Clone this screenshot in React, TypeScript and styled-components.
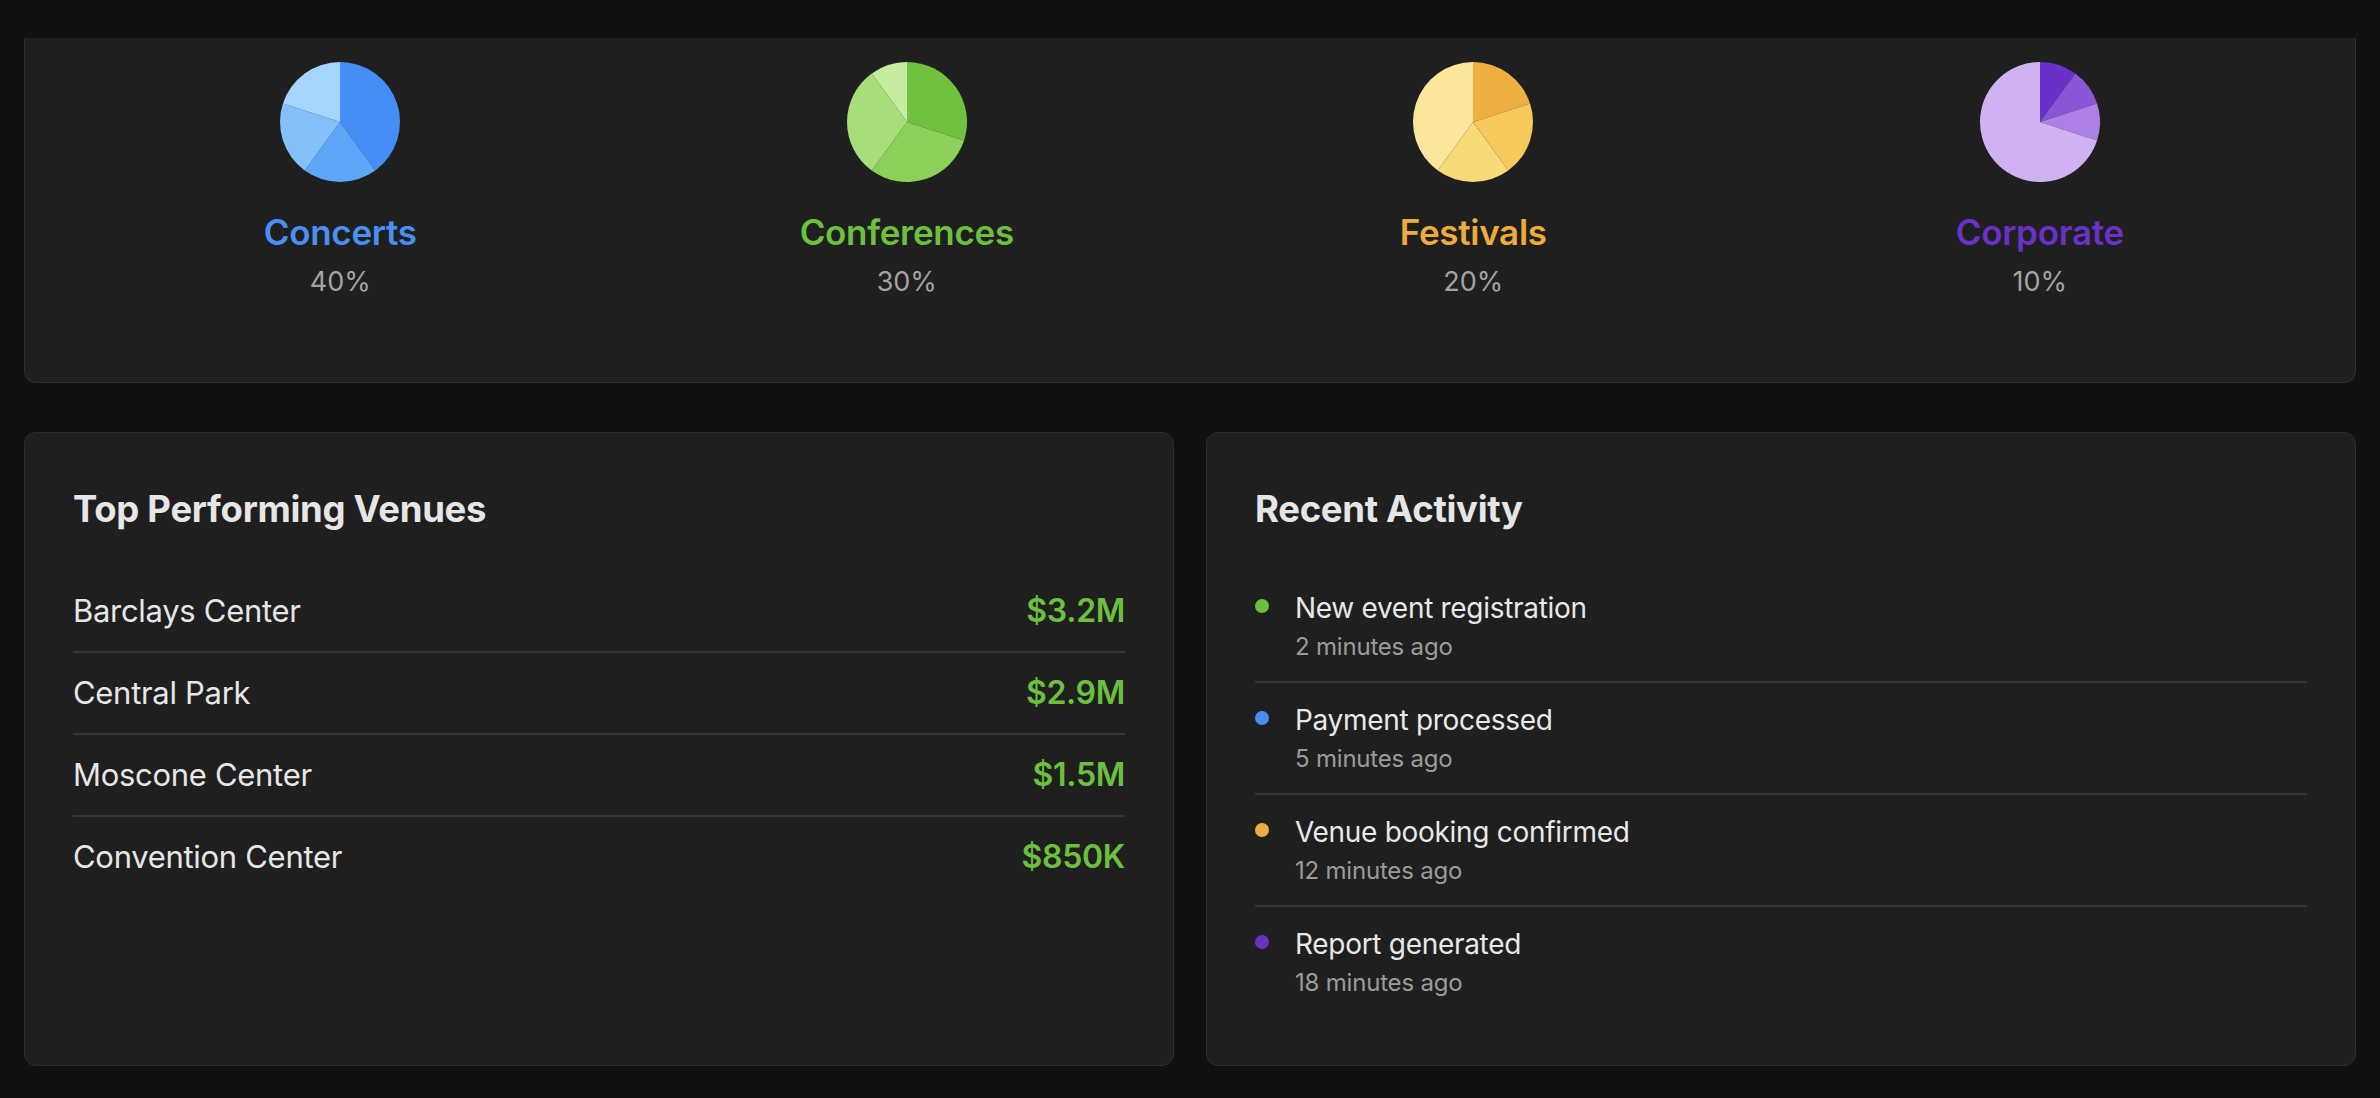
import React from "react";
import styled, { createGlobalStyle } from "styled-components";

const GlobalStyle = createGlobalStyle`
  html, body { margin: 0; padding: 0; background: #111111; }
  body {
    font-family: Inter, "Noto Sans", "Liberation Sans", sans-serif;
    -webkit-font-smoothing: antialiased;
  }
  * { box-sizing: border-box; }
`;

const TopBar = styled.header`
  height: 38px;
  background: #111111;
`;

const Content = styled.main`
  padding: 0 24px 33px;
`;

const DistributionCard = styled.section`
  background: #1f1f1f;
  border: 1px solid #2e2e2e;
  border-top: none;
  border-radius: 0 0 12px 12px;
  padding: 24px 48px 84px;
  display: grid;
  grid-template-columns: repeat(4, 1fr);
  gap: 32px;
`;

const Category = styled.div`
  display: flex;
  flex-direction: column;
  align-items: center;
`;

const CategoryName = styled.div<{ $color: string }>`
  margin-top: 30px;
  font-size: 35px;
  line-height: 40px;
  font-weight: 600;
  color: ${(p) => p.$color};
  letter-spacing: -0.3px;
`;

const CategoryPct = styled.div`
  margin-top: 14px;
  font-size: 27px;
  line-height: 32px;
  color: #a3a3a3;
`;

const LowerGrid = styled.div`
  margin-top: 49px;
  display: grid;
  grid-template-columns: 1fr 1fr;
  gap: 32px;
`;

const Panel = styled.section`
  background: #1f1f1f;
  border: 1px solid #2e2e2e;
  border-radius: 12px;
  padding: 48px;
`;

const PanelTitle = styled.h2`
  margin: 0 0 32px;
  font-size: 36.5px;
  line-height: 57.6px;
  font-weight: 700;
  color: #e6e6e6;
  letter-spacing: -0.3px;
`;

const List = styled.ul`
  list-style: none;
  margin: 0;
  padding: 0;
`;

const VenueRow = styled.li`
  display: flex;
  justify-content: space-between;
  align-items: center;
  padding: 16px 0;
  font-size: 31px;
  line-height: 48px;
  border-bottom: 2px solid #353535;
  &:last-child { border-bottom: none; }
`;

const VenueName = styled.span`
  color: #e6e6e6;
  letter-spacing: -0.3px;
`;

const VenueValue = styled.span`
  color: #6cbf3f;
  font-size: 32px;
  font-weight: 600;
  letter-spacing: -0.3px;
`;

const ActivityRow = styled.li`
  display: flex;
  align-items: flex-start;
  gap: 26px;
  padding: 16px 0;
  border-bottom: 2px solid #353535;
  &:last-child { border-bottom: none; }
`;

const Dot = styled.span<{ $color: string }>`
  flex: none;
  width: 14px;
  height: 14px;
  margin-top: 12px;
  border-radius: 50%;
  background: ${(p) => p.$color};
`;

const ActivityText = styled.div`
  display: flex;
  flex-direction: column;
`;

const ActivityTitle = styled.span`
  font-size: 28px;
  line-height: 42px;
  color: #e8e8e8;
  letter-spacing: -0.3px;
`;

const ActivityTime = styled.span`
  font-size: 24px;
  line-height: 36px;
  color: #9b9b9b;
  letter-spacing: -0.2px;
`;

type Slice = [number, string];

const point = (deg: number, r: number) => {
  const a = (deg * Math.PI) / 180;
  return `${(r + r * Math.sin(a)).toFixed(3)} ${(r - r * Math.cos(a)).toFixed(3)}`;
};

const Pie: React.FC<{ slices: Slice[]; size?: number }> = ({ slices, size = 120 }) => {
  const r = size / 2;
  let start = 0;
  return (
    <svg width={size} height={size} viewBox={`0 0 ${size} ${size}`}>
      {slices.map(([pct, color], i) => {
        const a0 = start;
        const a1 = start + pct * 3.6;
        start = a1;
        const large = a1 - a0 > 180 ? 1 : 0;
        return (
          <path
            key={i}
            d={`M ${r} ${r} L ${point(a0, r)} A ${r} ${r} 0 ${large} 1 ${point(a1, r)} Z`}
            fill={color}
          />
        );
      })}
    </svg>
  );
};

const categories: { name: string; pct: string; color: string; slices: Slice[] }[] = [
  {
    name: "Concerts",
    pct: "40%",
    color: "#4a8ff2",
    slices: [[40, "#448ef5"], [20, "#5ea7f8"], [20, "#85c0fb"], [20, "#a5d4fc"]],
  },
  {
    name: "Conferences",
    pct: "30%",
    color: "#6dbf3f",
    slices: [[30, "#6fc13f"], [30, "#8bd058"], [30, "#a7de79"], [10, "#c5eba0"]],
  },
  {
    name: "Festivals",
    pct: "20%",
    color: "#efab3d",
    slices: [[20, "#efb043"], [20, "#f5c95c"], [20, "#f8da78"], [40, "#fbe79c"]],
  },
  {
    name: "Corporate",
    pct: "10%",
    color: "#6a31c8",
    slices: [[10, "#6a31c8"], [10, "#8a56d8"], [10, "#ad80e5"], [70, "#d0b2f3"]],
  },
];

const venues = [
  { name: "Barclays Center", value: "$3.2M" },
  { name: "Central Park", value: "$2.9M" },
  { name: "Moscone Center", value: "$1.5M" },
  { name: "Convention Center", value: "$850K" },
];

const activities = [
  { title: "New event registration", time: "2 minutes ago", color: "#6cbf3f" },
  { title: "Payment processed", time: "5 minutes ago", color: "#448ef5" },
  { title: "Venue booking confirmed", time: "12 minutes ago", color: "#efab3d" },
  { title: "Report generated", time: "18 minutes ago", color: "#6a31c8" },
];

export default function App() {
  return (
    <>
      <GlobalStyle />
      <TopBar />
      <Content>
        <DistributionCard>
          {categories.map((c) => (
            <Category key={c.name}>
              <Pie slices={c.slices} />
              <CategoryName $color={c.color}>{c.name}</CategoryName>
              <CategoryPct>{c.pct}</CategoryPct>
            </Category>
          ))}
        </DistributionCard>
        <LowerGrid>
          <Panel>
            <PanelTitle>Top Performing Venues</PanelTitle>
            <List>
              {venues.map((v) => (
                <VenueRow key={v.name}>
                  <VenueName>{v.name}</VenueName>
                  <VenueValue>{v.value}</VenueValue>
                </VenueRow>
              ))}
            </List>
          </Panel>
          <Panel>
            <PanelTitle>Recent Activity</PanelTitle>
            <List>
              {activities.map((a) => (
                <ActivityRow key={a.title}>
                  <Dot $color={a.color} />
                  <ActivityText>
                    <ActivityTitle>{a.title}</ActivityTitle>
                    <ActivityTime>{a.time}</ActivityTime>
                  </ActivityText>
                </ActivityRow>
              ))}
            </List>
          </Panel>
        </LowerGrid>
      </Content>
    </>
  );
}
